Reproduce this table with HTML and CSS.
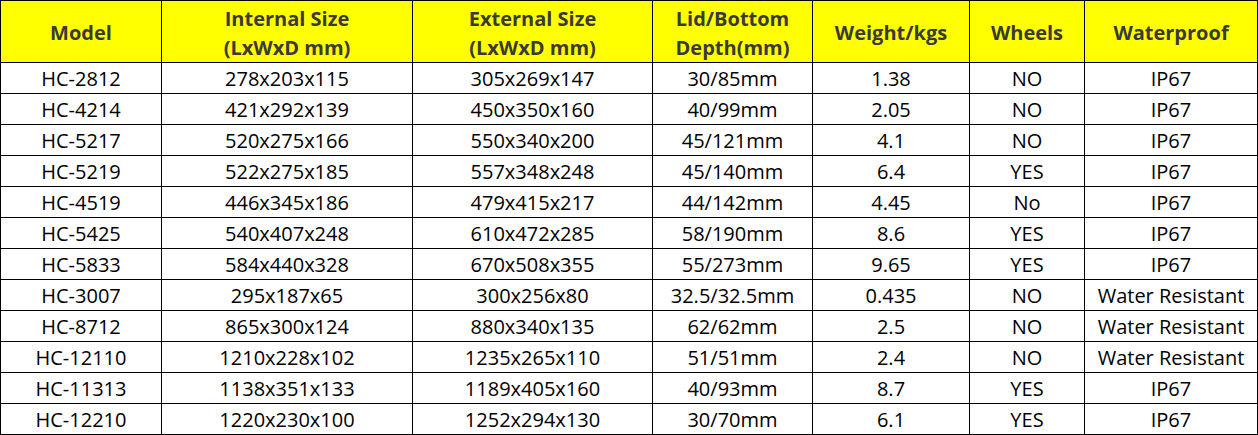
FILE: index.html
```html
<!DOCTYPE html>
<html>
<head>
<meta charset="utf-8">
<link rel="stylesheet" href="styles.css">
</head>
<body>
<table class="spec">
  <colgroup>
    <col class="c1"><col class="c2"><col class="c3"><col class="c4"><col class="c5"><col class="c6"><col class="c7">
  </colgroup>
  <thead>
    <tr>
      <th>Model</th>
      <th>Internal Size<br>(LxWxD mm)</th>
      <th>External Size<br>(LxWxD mm)</th>
      <th>Lid/Bottom<br>Depth(mm)</th>
      <th>Weight/kgs</th>
      <th>Wheels</th>
      <th>Waterproof</th>
    </tr>
  </thead>
  <tbody>
    <tr><td>HC-2812</td><td>278x203x115</td><td>305x269x147</td><td>30/85mm</td><td>1.38</td><td>NO</td><td>IP67</td></tr>
    <tr><td>HC-4214</td><td>421x292x139</td><td>450x350x160</td><td>40/99mm</td><td>2.05</td><td>NO</td><td>IP67</td></tr>
    <tr><td>HC-5217</td><td>520x275x166</td><td>550x340x200</td><td>45/121mm</td><td>4.1</td><td>NO</td><td>IP67</td></tr>
    <tr><td>HC-5219</td><td>522x275x185</td><td>557x348x248</td><td>45/140mm</td><td>6.4</td><td>YES</td><td>IP67</td></tr>
    <tr><td>HC-4519</td><td>446x345x186</td><td>479x415x217</td><td>44/142mm</td><td>4.45</td><td>No</td><td>IP67</td></tr>
    <tr><td>HC-5425</td><td>540x407x248</td><td>610x472x285</td><td>58/190mm</td><td>8.6</td><td>YES</td><td>IP67</td></tr>
    <tr><td>HC-5833</td><td>584x440x328</td><td>670x508x355</td><td>55/273mm</td><td>9.65</td><td>YES</td><td>IP67</td></tr>
    <tr><td>HC-3007</td><td>295x187x65</td><td>300x256x80</td><td>32.5/32.5mm</td><td>0.435</td><td>NO</td><td>Water Resistant</td></tr>
    <tr><td>HC-8712</td><td>865x300x124</td><td>880x340x135</td><td>62/62mm</td><td>2.5</td><td>NO</td><td>Water Resistant</td></tr>
    <tr><td>HC-12110</td><td>1210x228x102</td><td>1235x265x110</td><td>51/51mm</td><td>2.4</td><td>NO</td><td>Water Resistant</td></tr>
    <tr><td>HC-11313</td><td>1138x351x133</td><td>1189x405x160</td><td>40/93mm</td><td>8.7</td><td>YES</td><td>IP67</td></tr>
    <tr><td>HC-12210</td><td>1220x230x100</td><td>1252x294x130</td><td>30/70mm</td><td>6.1</td><td>YES</td><td>IP67</td></tr>
  </tbody>
</table>
</body>
</html>
```

FILE: styles.css
```css
html, body {
  margin: 0;
  padding: 0;
  background: #ffffff;
}

.spec {
  border-collapse: collapse;
  table-layout: fixed;
  width: 1257px;
  font-family: "Open Sans", "Liberation Sans", sans-serif;
  font-size: 20px;
  color: #000000;
}

.c1 { width: 161px; }
.c2 { width: 251px; }
.c3 { width: 240px; }
.c4 { width: 160px; }
.c5 { width: 157px; }
.c6 { width: 115px; }
.c7 { width: 173px; }

.spec th,
.spec td {
  border: 1px solid #000000;
  text-align: center;
  padding: 0;
  white-space: nowrap;
  overflow: hidden;
}

.spec th {
  background: #ffff00;
  color: #3a3a3a;
  font-weight: 700;
  height: 59px;
  padding-top: 2px;
  line-height: 29px;
}

.spec td {
  height: 29px;
  padding-top: 1px;
  line-height: 29px;
}
```
